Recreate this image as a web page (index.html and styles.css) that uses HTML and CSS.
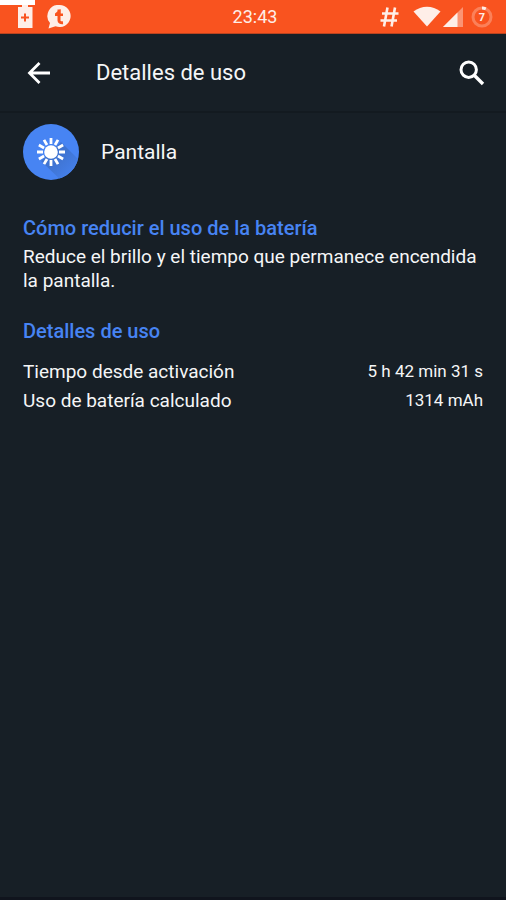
FILE: index.html
```html
<!DOCTYPE html>
<html lang="es">
<head>
<meta charset="utf-8">
<meta name="viewport" content="width=device-width, initial-scale=1">
<title>Detalles de uso</title>
<link rel="stylesheet" href="styles.css">
</head>
<body>
<div class="status">
  <span class="charge"></span>
  <div class="status-left">
    <svg width="16" height="24" viewBox="0 0 16 24" aria-hidden="true">
      <path fill="#feeee8" d="M5 0h6v2h4.500V23H1V2H5z"/>
      <path stroke="#f9531f" stroke-width="2" d="M4 12.500h8M8 8.500v8"/>
    </svg>
    <svg width="24" height="24" viewBox="0 0 24 24" aria-hidden="true">
      <path fill="#feeee8" d="M12.500 0a11 11 0 1 1-4 21.200L1.500 23.500 3 18A11 11 0 0 1 12.500 0z"/>
      <path fill="none" stroke="#f9531f" stroke-width="3" d="M12 4.500v11q0 2.500 4 2.200"/>
      <path fill="#f9531f" d="M8 8.500 13.500 4v4.500H16V11H8z"/>
    </svg>
  </div>
  <time class="clock">23:43</time>
  <div class="status-right">
    <svg class="hash" width="20" height="22" viewBox="0 0 20 22" aria-hidden="true">
      <path fill="none" stroke="#feeee8" stroke-width="2.600" d="M8.500 1.500 5 20.500M16 1.500 12.500 20.500M3 7.500h16.500M1.500 14.500h16.500"/>
    </svg>
    <svg class="wifi" width="28" height="22" viewBox="0 0 28 22" aria-hidden="true">
      <path fill="#feeee8" d="M.5 5.500C8.500-.8 19.500-.8 27.500 5.500L14 20.500z"/>
    </svg>
    <svg class="signal" width="20" height="20" viewBox="0 0 20 20" aria-hidden="true">
      <path fill="#fb9474" d="M20 0v20H0z"/>
      <path fill="#feeee8" d="M14.500 5.500V20H0z"/>
    </svg>
    <svg width="22" height="22" viewBox="0 0 22 22" role="img" aria-label="7">
      <circle cx="11" cy="11" r="9" fill="none" stroke="#fb8059" stroke-width="3"/>
      <path fill="none" stroke="#feeee8" stroke-width="3" d="M11 2q2 0 3.800.8"/>
      <text class="level" x="11" y="15" text-anchor="middle">7</text>
    </svg>
  </div>
</div>
<header class="bar">
  <button class="icon-button" type="button" aria-label="Atrás">
    <svg width="24" height="24" viewBox="0 0 24 24">
      <path fill="none" stroke="#fff" stroke-width="2.800" d="M23 12H3M12.500 2 2.500 12l10 10"/>
    </svg>
  </button>
  <h1>Detalles de uso</h1>
  <button class="icon-button" type="button" aria-label="Buscar">
    <svg width="26" height="26" viewBox="0 0 26 26">
      <circle cx="9.700" cy="9.700" r="7.700" fill="none" stroke="#fff" stroke-width="3"/>
      <path stroke="#fff" stroke-width="3.400" d="m15.500 15.500 8.500 8.500"/>
    </svg>
  </button>
</header>
<main>
  <div class="item">
    <svg width="56" height="56" viewBox="0 0 56 56" aria-hidden="true">
      <defs>
        <clipPath id="disc"><circle cx="28" cy="28" r="28"/></clipPath>
        <linearGradient id="shade" x1="0" y1="0" x2="1" y2="1">
          <stop offset=".4" stop-color="#3f74d2"/>
          <stop offset=".85" stop-color="#4784f3"/>
        </linearGradient>
      </defs>
      <circle cx="28" cy="28" r="28" fill="#4784f3"/>
      <path clip-path="url(#disc)" fill="url(#shade)" d="M38 18 60 40 44 62 18 37z"/>
      <circle cx="28" cy="28" r="6.800" fill="#fff"/>
      <g stroke="#fff" stroke-width="2.800">
        <path id="ray" d="M28 14v6M28 36v6"/>
        <use href="#ray" transform="rotate(30 28 28)"/>
        <use href="#ray" transform="rotate(60 28 28)"/>
        <use href="#ray" transform="rotate(90 28 28)"/>
        <use href="#ray" transform="rotate(120 28 28)"/>
        <use href="#ray" transform="rotate(150 28 28)"/>
      </g>
    </svg>
    <span class="name">Pantalla</span>
  </div>
  <section>
    <h2>Cómo reducir el uso de la batería</h2>
    <p>Reduce el brillo y el tiempo que permanece encendida la pantalla.</p>
  </section>
  <section>
    <h2>Detalles de uso</h2>
    <dl>
      <div class="row"><dt>Tiempo desde activación</dt><dd>5 h 42 min 31 s</dd></div>
      <div class="row"><dt>Uso de batería calculado</dt><dd>1314 mAh</dd></div>
    </dl>
  </section>
</main>
</body>
</html>
```
FILE: styles.css
```css
* { box-sizing: border-box; }
body {
  margin: 0;
  min-height: 100vh;
  background: #171f26;
  border-bottom: 3px solid #10141d;
  color: #f5f6f7;
  font-family: Roboto, "Liberation Sans", sans-serif;
}
h1, h2, p, dl, dd { margin: 0; font-weight: 400; }
svg { display: block; flex: none; }
.status {
  position: relative;
  display: grid;
  grid-template-columns: 1fr auto 1fr;
  align-items: center;
  height: 34px;
  padding: 0 13px 0 17px;
  background: #f9531f;
  border-bottom: 1px solid #b9431f;
}
.charge {
  position: absolute;
  top: 0;
  left: 0;
  width: 7%;
  height: 5px;
  background: #fff;
}
.status-left { display: flex; gap: 14px; }
.status-right {
  display: flex;
  align-items: center;
  justify-content: flex-end;
}
.hash { margin-right: 14px; }
.wifi { margin-right: 2px; }
.signal { margin-right: 8px; }
.clock { color: #feeee8; font-size: 18px; }
.level { fill: #feeee8; font-size: 11px; font-weight: 700; }
.bar {
  display: flex;
  align-items: center;
  height: 79px;
  padding: 0 16px 0 21px;
  border-bottom: 2px solid #131a20;
}
.icon-button {
  display: grid;
  place-items: center;
  width: 36px;
  height: 40px;
  padding: 0;
  border: 0;
  background: none;
}
.bar h1 { flex: 1; margin-left: 39px; font-size: 22px; }
main { padding: 11px 23px; }
.item { display: flex; align-items: center; gap: 22px; margin-bottom: 36px; }
.name { font-size: 21px; }
section { margin-bottom: 26px; }
h2 { color: #4784f3; font-size: 20px; font-weight: 500; line-height: 24px; }
p { margin-top: 5px; font-size: 19px; line-height: 24px; }
dl { margin-top: 14px; }
.row {
  display: flex;
  justify-content: space-between;
  font-size: 19px;
  line-height: 29px;
}
dd { font-size: 17px; }
```
